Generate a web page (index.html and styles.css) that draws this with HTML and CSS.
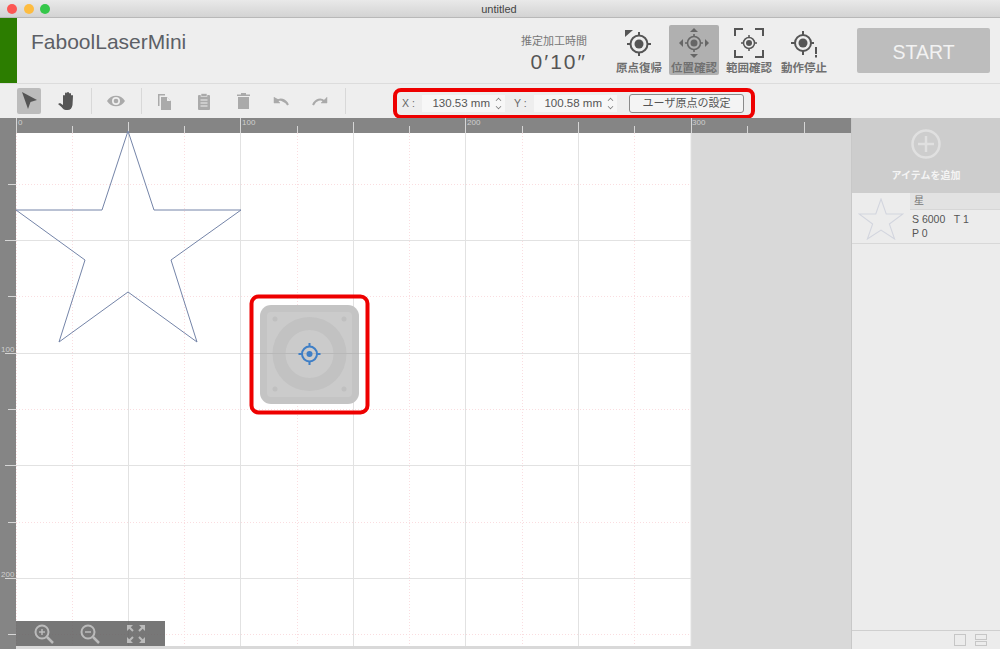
FILE: index.html
```html
<!DOCTYPE html>
<html lang="en">
<head>
  <meta charset="UTF-8">
  <title>untitled</title>
  <link rel="stylesheet" href="styles.css">
</head>
<body>
<div class="app">

  <div class="titlebar">
    <div class="lights">
      <span class="light red"></span>
      <span class="light yellow"></span>
      <span class="light green"></span>
    </div>
    <div class="window-title">untitled</div>
  </div>

  <div class="header">
    <div class="status-strip"></div>
    <div class="app-name">FaboolLaserMini</div>
    <div class="time">
      <div class="time-label">推定加工時間</div>
      <div class="time-value">0′10″</div>
    </div>
    <div class="actions">
      <div class="action">
        <svg width="30" height="30" viewBox="0 0 30 30">
          <path d="M1 2h8l-8 7z" fill="#555"/>
          <circle cx="15" cy="16" r="8.5" fill="none" stroke="#555" stroke-width="2"/>
          <circle cx="15" cy="16" r="4.5" fill="#555"/>
          <path d="M15 4v4M15 24v4M3 16h4M23 16h4" stroke="#555" stroke-width="2"/>
        </svg>
        <span>原点復帰</span>
      </div>
      <div class="action active">
        <svg width="34" height="30" viewBox="0 0 34 30">
          <circle cx="17" cy="15" r="6.5" fill="none" stroke="#666" stroke-width="1.6"/>
          <circle cx="17" cy="15" r="3.5" fill="#666"/>
          <path d="M17 6v2.500M17 21.500v2.500M8 15h2.500M23.500 15h2.500" stroke="#666" stroke-width="1.600"/>
          <path d="M17 0l4 4h-8zM17 30l4-4h-8zM2 15l4-4v8zM32 15l-4-4v8z" fill="#666"/>
        </svg>
        <span>位置確認</span>
      </div>
      <div class="action">
        <svg width="30" height="30" viewBox="0 0 30 30">
          <path d="M1 8V1h8M21 1h8v7M1 22v7h8M29 22v7h-8" fill="none" stroke="#555" stroke-width="2"/>
          <circle cx="15" cy="15" r="5.500" fill="none" stroke="#555" stroke-width="1.500"/>
          <circle cx="15" cy="15" r="3" fill="#555"/>
          <path d="M15 7v2M15 21v2M7 15h2M21 15h2" stroke="#555" stroke-width="1.500"/>
        </svg>
        <span>範囲確認</span>
      </div>
      <div class="action">
        <svg width="30" height="30" viewBox="0 0 30 30">
          <circle cx="14" cy="15" r="8" fill="none" stroke="#555" stroke-width="2"/>
          <circle cx="14" cy="15" r="4.500" fill="#555"/>
          <path d="M14 3v4M14 23v4M2 15h4M22 15h3" stroke="#555" stroke-width="2"/>
          <path d="M27 19v7M27 27v2.500" stroke="#555" stroke-width="2"/>
        </svg>
        <span>動作停止</span>
      </div>
    </div>
    <div class="start">START</div>
  </div>

  <div class="toolbar">
    <div class="tool selected">
      <svg width="20" height="20" viewBox="0 0 20 20"><path d="M3 1l15 8-6.500 2-2.500 7z" fill="#555"/></svg>
    </div>
    <div class="tool hand">
      <svg width="20" height="20" viewBox="0 0 20 20"><path d="M1 13l2-1 3 2V5a1 1 0 0 1 2 0V2.500a1 1 0 0 1 2 0V2a1 1 0 0 1 2 0v1a1 1 0 0 1 2 0v2a1 1 0 0 1 2 0l-.5 9c-.5 3-2 5-5 5H9c-2 0-3-1-4.500-3z" fill="#555"/></svg>
    </div>
    <div class="divider first"></div>
    <div class="tool eye">
      <svg width="20" height="14" viewBox="0 0 20 14"><path d="M1 7c4-7 14-7 18 0-4 7-14 7-18 0z" fill="#aaa"/><circle cx="10" cy="7" r="4" fill="#eee"/><circle cx="10" cy="7" r="2.300" fill="#aaa"/></svg>
    </div>
    <div class="divider second"></div>
    <div class="tool copy">
      <svg width="16" height="17" viewBox="0 0 16 17"><path d="M1 1h7v1.500H2.500V13H1z" fill="#aaa"/><path d="M4 4h6l4 4v9H4z" fill="#aaa"/><path d="M10 4v4h4z" fill="#eee"/></svg>
    </div>
    <div class="tool clip">
      <svg width="14" height="17" viewBox="0 0 14 17"><rect x="1" y="2" width="12" height="15" rx="1" fill="#aaa"/><rect x="4" y="0.500" width="6" height="3" fill="#aaa" stroke="#eee" stroke-width=".6"/><path d="M3.500 7h7M3.500 10h7M3.500 13h7" stroke="#eee"/></svg>
    </div>
    <div class="tool trash">
      <svg width="13" height="16" viewBox="0 0 13 16"><path d="M0 1.500h13V3H0z" fill="#aaa"/><path d="M4 0h5v2H4zM1 4h11v12H1z" fill="#aaa"/></svg>
    </div>
    <div class="tool undo">
      <svg width="16" height="10" viewBox="0 0 16 10"><path d="M1 1v6h6L4.800 4.800C8 2.500 12 3.500 14 8" fill="#aaa" stroke="#aaa" stroke-width=".5"/><path d="M4 5c3-2.500 8-2 11 4" fill="none" stroke="#aaa" stroke-width="2"/></svg>
    </div>
    <div class="tool redo">
      <svg width="16" height="10" viewBox="0 0 16 10"><path d="M15 1v6H9l2.200-2.200" fill="#aaa" stroke="#aaa" stroke-width=".5"/><path d="M12 5C9 2.500 4 3 1 9" fill="none" stroke="#aaa" stroke-width="2"/></svg>
    </div>
    <div class="divider third"></div>

    <div class="origin-box">
      <span class="axis">X :</span>
      <div class="stepper"><span>130.53 mm</span><i class="arrows"></i></div>
      <span class="axis y">Y :</span>
      <div class="stepper"><span>100.58 mm</span><i class="arrows"></i></div>
      <div class="origin-btn">ユーザ原点の設定</div>
    </div>
  </div>

  <div class="workspace">
    <div class="stage">
      <svg class="canvas" width="851" height="531" viewBox="0 118 851 531">
        <rect x="0" y="118" width="851" height="531" fill="#d9d9d9"/>
        <rect x="16" y="133" width="675" height="513" fill="#fff"/>

        <g stroke="#fadde0" stroke-dasharray="1 2">
          <path d="M16.500 133V646M72.500 133V646M184.500 133V646M297.500 133V646M409.500 133V646M522.500 133V646M634.500 133V646"/>
          <path d="M16 184.500H691M16 296.500H691M16 409.500H691M16 522.500H691M16 634.500H691"/>
        </g>
        <g stroke="#e2e2e2">
          <path d="M128.500 133V646M240.500 133V646M353.500 133V646M465.500 133V646M578.500 133V646M691 133V646"/>
          <path d="M16 240.500H691M16 353.500H691M16 465.500H691M16 578.500H691"/>
        </g>

        <!-- rulers -->
        <rect x="0" y="118" width="851" height="15" fill="#858585"/>
        <rect x="0" y="118" width="16" height="531" fill="#858585"/>
        <g stroke="#d6d6d6">
          <path d="M16.500 118V133M128.500 122V133M240.500 118V133M353.500 122V133M465.500 118V133M578.500 122V133M691.500 118V133M804.500 122V133"/>
          <path d="M72.500 126V133M184.500 126V133M297.500 126V133M409.500 126V133M522.500 126V133M634.500 126V133M747.500 126V133"/>
          <path d="M8 184.500H16M8 296.500H16M8 409.500H16M8 522.500H16M8 634.500H16"/>
          <path d="M5 240.500H16M5 353.500H16M5 465.500H16M5 578.500H16"/>
        </g>
        <g class="ruler-label">
          <text x="18" y="125">0</text>
          <text x="242" y="125">100</text>
          <text x="467" y="125">200</text>
          <text x="692" y="125">300</text>
          <text x="1" y="352">100</text>
          <text x="1" y="577">200</text>
        </g>

        <path d="M128 131L154 210H241L171 260L197 342L128 292L59 342L85 260L16 210H102Z" fill="none" stroke="#7484a8" stroke-width="1"/>

        <!-- laser head position -->
        <g>
          <rect x="260" y="305" width="99" height="99" rx="11" fill="#c4c4c4"/>
          <rect x="267" y="312" width="85" height="85" rx="4" fill="#cbcbcb"/>
          <circle cx="309.500" cy="354" r="37" fill="#c2c2c2"/>
          <circle cx="309.500" cy="354" r="24" fill="#cbcbcb"/>
          <circle cx="275" cy="319" r="2.500" fill="#c0c0c0"/>
          <circle cx="344" cy="319" r="2.500" fill="#c0c0c0"/>
          <circle cx="275" cy="389" r="2.500" fill="#c0c0c0"/>
          <circle cx="344" cy="389" r="2.500" fill="#c0c0c0"/>
        </g>
        <rect x="251.500" y="296.500" width="116" height="116" rx="7" fill="none" stroke="#ee0000" stroke-width="4"/>
        <path d="M260 353.500H359" stroke="#b8b8b8"/>
        <circle cx="309.500" cy="354" r="7.500" fill="none" stroke="#3f7fc6" stroke-width="2"/>
        <circle cx="309.500" cy="354" r="3" fill="#3f7fc6"/>
        <path d="M309.500 343v4M309.500 361v4M298.500 354h4M316.500 354h4" stroke="#3f7fc6" stroke-width="2"/>
      </svg>

      <div class="zoombar">
        <svg width="20" height="20" viewBox="0 0 20 20"><circle cx="8" cy="8" r="6.500" fill="none" stroke="#bbb" stroke-width="2"/><path d="M13 13l6 6" stroke="#bbb" stroke-width="2.500"/><path d="M5 8h6M8 5v6" stroke="#bbb" stroke-width="1.500"/></svg>
        <svg width="20" height="20" viewBox="0 0 20 20"><circle cx="8" cy="8" r="6.500" fill="none" stroke="#bbb" stroke-width="2"/><path d="M13 13l6 6" stroke="#bbb" stroke-width="2.500"/><path d="M5 8h6" stroke="#bbb" stroke-width="1.500"/></svg>
        <svg width="20" height="20" viewBox="0 0 20 20"><path d="M1 1h6L1 7zM19 1v6l-6-6zM1 19v-6l6 6zM19 19h-6l6-6z" fill="#bbb"/><path d="M3 3l4 4M17 3l-4 4M3 17l4-4M17 17l-4-4" stroke="#bbb" stroke-width="2"/></svg>
      </div>
    </div>

    <div class="sidebar">
      <div class="add-item">
        <svg width="30" height="30" viewBox="0 0 30 30"><circle cx="15" cy="15" r="13.500" fill="none" stroke="#e0e0e0" stroke-width="2.500"/><path d="M15 7v16M7 15h16" stroke="#e0e0e0" stroke-width="2.500"/></svg>
        <span>アイテムを追加</span>
      </div>
      <div class="item">
        <svg class="item-thumb" width="46" height="42" viewBox="0 0 44 42" preserveAspectRatio="none"><path d="M22 1L27 16H43L30 26L35 41L22 32L9 41L14 26L1 16H17Z" fill="none" stroke="#d2d5de"/></svg>
        <div class="item-body">
          <div class="item-name">星</div>
          <div class="item-params">S 6000 &nbsp; T 1<br>P 0</div>
        </div>
      </div>
      <div class="sidebar-space"></div>
      <div class="sidebar-foot">
        <span class="view-single"></span>
        <span class="view-split"><i></i><i></i></span>
      </div>
    </div>
  </div>

</div>
</body>
</html>
```

FILE: styles.css
```css
html, body {
  margin: 0;
  height: 100%;
  overflow: hidden;
}

body {
  font-family: "Liberation Sans", "Noto Sans CJK JP", sans-serif;
  color: #555;
}

.app {
  width: 1000px;
  height: 649px;
  display: flex;
  flex-direction: column;
  background: #eee;
}

/* window chrome */
.titlebar {
  height: 17px;
  flex: none;
  position: relative;
  display: flex;
  align-items: center;
  justify-content: center;
  background: linear-gradient(#e9e9e9, #d3d3d3);
  border-bottom: 1px solid #b8b8b8;
}

.lights {
  position: absolute;
  left: 7px;
  top: 4px;
  display: flex;
  gap: 6.5px;
}

.light {
  width: 10px;
  height: 10px;
  border-radius: 50%;
}

.light.red { background: #fc5753; }
.light.yellow { background: #fdbc40; }
.light.green { background: #34c749; }

.window-title {
  font-size: 11px;
  color: #444;
  margin-right: 2px;
}

/* top header */
.header {
  height: 65px;
  flex: none;
  display: flex;
  border-bottom: 1px solid #dcdcdc;
}

.status-strip {
  width: 17px;
  background: #2c7d00;
}

.app-name {
  margin: 12px 0 0 14px;
  font-size: 21px;
  line-height: 24px;
  color: #5c5f66;
  width: 335px;
  flex: none;
}

.time {
  width: 221px;
  flex: none;
  margin-top: 16px;
  text-align: right;
}

.time-label {
  font-size: 11px;
  line-height: 14px;
  color: #777;
}

.time-value {
  font-size: 21px;
  line-height: 22px;
  margin-top: 3px;
  letter-spacing: 2px;
  color: #555;
}

.actions {
  display: flex;
  margin: 7px 0 0 27px;
  width: 220px;
  flex: none;
}

.action {
  width: 50px;
  height: 50px;
  margin-right: 5px;
  display: flex;
  flex-direction: column;
  align-items: center;
  border-radius: 2px;
  font-size: 11.5px;
  line-height: 13px;
  font-weight: bold;
  color: #707070;
}

.action svg {
  margin-top: 3px;
  flex: none;
}

.action span {
  margin-top: 4px;
  white-space: nowrap;
}

.action.active {
  background: #b0b0b0;
}

.start {
  width: 133px;
  height: 45px;
  margin: 10px 0 0 23px;
  background: #bdbdbd;
  border-radius: 2px;
  color: #f2f2f2;
  font-size: 19.5px;
  line-height: 48px;
  text-align: center;
}

/* toolbar */
.toolbar {
  height: 34px;
  flex: none;
  display: flex;
  align-items: center;
  padding-left: 17px;
  position: relative;
}

.tool {
  height: 26px;
  display: flex;
  align-items: center;
  justify-content: center;
  flex: none;
}

.tool.selected {
  width: 24px;
  background: #bcbcbc;
  border-radius: 2px;
}

.tool.hand { width: 20px; margin-left: 16px; }
.tool.eye { width: 20px; margin-left: 14px; }
.tool.copy { width: 16px; margin-left: 15px; }
.tool.clip { width: 14px; margin-left: 24px; }
.tool.trash { width: 13px; margin-left: 26px; }
.tool.undo { width: 16px; margin-left: 23px; }
.tool.redo { width: 16px; margin-left: 23px; }

.divider {
  width: 1px;
  height: 26px;
  background: #d8d8d8;
  flex: none;
}

.divider.first { margin-left: 14px; }
.divider.second { margin-left: 15px; }
.divider.third { margin-left: 17px; }

/* highlighted origin controls */
.origin-box {
  position: relative;
  top: 2px;
  width: 362px;
  height: 31px;
  box-sizing: border-box;
  margin-left: 47px;
  padding-left: 5px;
  display: flex;
  align-items: center;
  border: 4px solid #ee0000;
  border-radius: 8px;
  font-size: 11.5px;
}

.axis {
  width: 20px;
  flex: none;
  color: #666;
  font-size: 10.5px;
}

.axis.y { margin-left: 9px; }

.stepper {
  width: 83px;
  height: 17px;
  flex: none;
  display: flex;
  align-items: center;
  justify-content: flex-end;
  background: #f7f7f7;
  color: #555;
  gap: 5px;
  padding-right: 2px;
  box-sizing: border-box;
}

.arrows {
  width: 8px;
  height: 13px;
  position: relative;
}

.arrows::before,
.arrows::after {
  content: "";
  position: absolute;
  left: 1px;
  width: 4px;
  height: 4px;
  border-left: 1px solid #777;
  border-top: 1px solid #777;
  transform: rotate(45deg) scale(.8);
}

.arrows::before { top: 1px; }

.arrows::after {
  bottom: 1px;
  transform: rotate(225deg) scale(.8);
}

.origin-btn {
  width: 115px;
  height: 19px;
  box-sizing: border-box;
  margin-left: 12px;
  flex: none;
  background: #f4f4f4;
  border: 1px solid #8a8a8a;
  border-radius: 3px;
  text-align: center;
  line-height: 16px;
  font-size: 11px;
  color: #555;
}

/* main area */
.workspace {
  flex: 1;
  display: flex;
  min-height: 0;
}

.stage {
  width: 851px;
  flex: none;
  position: relative;
}

.canvas {
  display: block;
}

.ruler-label text {
  font-size: 8px;
  fill: #cfcfcf;
}

.zoombar {
  position: absolute;
  left: 16px;
  top: 503px;
  width: 149px;
  height: 25px;
  display: flex;
  align-items: center;
  justify-content: space-between;
  padding: 0 19px 0 18px;
  box-sizing: border-box;
  background: rgba(95, 95, 95, .85);
}

/* right column */
.sidebar {
  flex: 1;
  display: flex;
  flex-direction: column;
  background: #ececec;
  border-left: 1px solid #c8c8c8;
}

.add-item {
  height: 75px;
  flex: none;
  display: flex;
  flex-direction: column;
  align-items: center;
  background: #cdcdcd;
  color: #f4f4f4;
  font-size: 10px;
  font-weight: bold;
}

.add-item svg {
  margin-top: 11px;
  margin-bottom: 8px;
}

.item {
  height: 51px;
  flex: none;
  display: flex;
  box-sizing: border-box;
  border-bottom: 1px solid #d8d8d8;
}

.item-thumb {
  margin: 5px 6px 0 6px;
  flex: none;
}

.item-name {
  height: 16px;
  background: #e2e2e2;
  border-bottom: 1px solid #d6d6d6;
  padding-left: 4px;
  font-size: 10px;
  line-height: 16px;
  color: #777;
}

.item-body {
  flex: 1;
}

.item-params {
  padding: 2px 0 0 2px;
  font-size: 10.5px;
  line-height: 14px;
  color: #555;
}

.sidebar-space {
  flex: 1;
}

.sidebar-foot {
  height: 19px;
  flex: none;
  box-sizing: border-box;
  border-top: 1px solid #cfcfcf;
  display: flex;
  justify-content: flex-end;
  gap: 9px;
  padding: 3px 13px 0 0;
}

.view-single {
  width: 12px;
  height: 12px;
  border: 1px solid #c6c6c6;
  box-sizing: border-box;
}

.view-split {
  width: 12px;
  height: 12px;
  display: flex;
  flex-direction: column;
  gap: 1px;
}

.view-split i {
  flex: 1;
  border: 1px solid #c6c6c6;
}
```
